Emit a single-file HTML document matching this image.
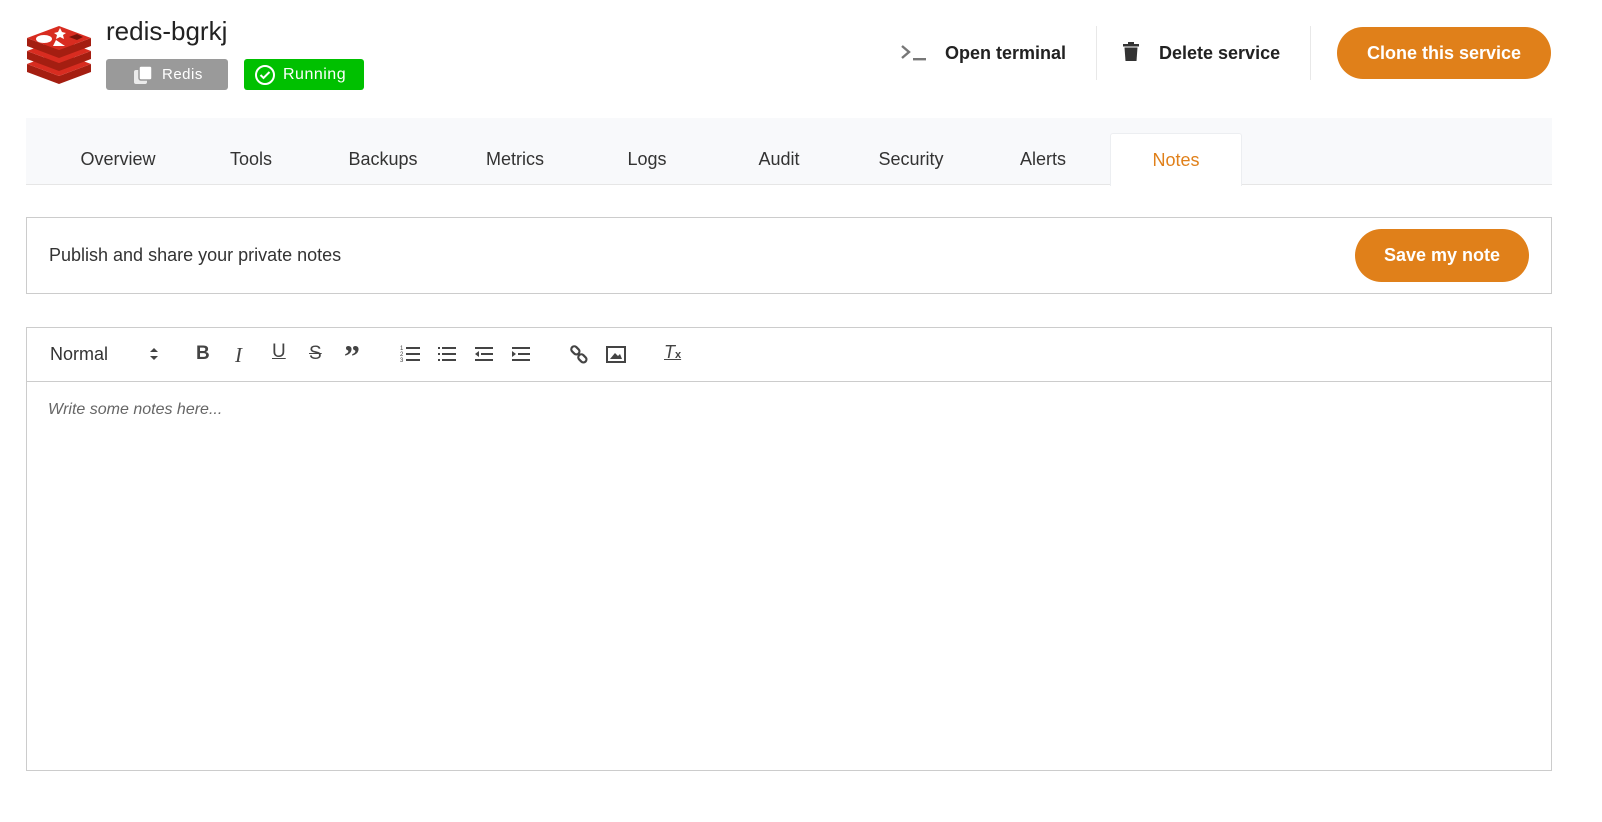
<!DOCTYPE html>
<html><head><meta charset="utf-8"><style>
*{box-sizing:border-box;margin:0;padding:0}
body{width:1602px;height:822px;background:#fff;font-family:"Liberation Sans",Arial,sans-serif;color:#222;position:relative;overflow:hidden}
.abs{position:absolute}
.title{left:106px;top:16px;font-size:26px;color:#222}
.badge{top:59px;height:31px;border-radius:3px;color:#fff;font-size:15px;display:flex;align-items:center;letter-spacing:.5px}
.act{top:43px;font-size:18px;font-weight:bold;color:#222}
.sep{top:26px;width:1px;height:54px;background:#e8e8e8}
.btn{background:#e0801a;color:#fff;font-weight:bold;font-size:18px;border-radius:27px;display:flex;align-items:center;justify-content:center}
.tabs{left:26px;top:118px;width:1526px;height:67px;background:#f8f9fb;border-bottom:1px solid #e6e6e6}
.tab{position:absolute;top:15px;width:132px;height:52px;text-align:center;line-height:52px;font-size:18px;color:#333}
.tab.on{background:#fff;color:#e0801a;border:1px solid #eceef1;border-bottom:none;border-radius:3px 3px 0 0;height:53px}
.box{border:1px solid #ccc}
.tb{font-size:18px;color:#333}
</style></head><body>
<svg class="abs" style="left:25px;top:24px" width="68" height="60" viewBox="0 0 68 60">
<path d="M2 40 L34 52 L66 40 L66 48 L34 60 L2 48Z" fill="#a41e11"/>
<path d="M2 40 L34 28 L66 40 L34 52Z" fill="#d82c20"/>
<path d="M2 27 L34 39 L66 27 L66 35 L34 47 L2 35Z" fill="#a41e11"/>
<path d="M2 27 L34 15 L66 27 L34 39Z" fill="#d82c20"/>
<path d="M2 14 L34 26 L66 14 L66 22 L34 34 L2 22Z" fill="#a41e11"/>
<path d="M2 14 L34 2 L66 14 L34 26Z" fill="#d82c20"/>
<ellipse cx="19" cy="15" rx="8" ry="4" fill="#fff"/>
<path d="M35 4 l2 4 4 1 -3 2 1 4 -4-2 -4 2 1-4 -3-2 4-1z" fill="#fff"/>
<path d="M28 22 L40 22 L31 16Z" fill="#fff"/>
<path d="M44 13 L52 10 L58 13 L52 16Z" fill="#7a1209"/>
</svg>
<div class="abs title">redis-bgrkj</div>
<div class="abs badge" style="left:106px;width:122px;background:#9a9a9a;padding-left:26px">
<svg width="22" height="22" viewBox="0 0 22 22" style="margin-right:8px"><rect x="2" y="6" width="13" height="14" rx="2" fill="#fff" opacity=".8"/><rect x="7" y="2" width="13" height="14" rx="2" fill="#fff" stroke="#9a9a9a" stroke-width="1.5"/></svg>Redis</div>
<div class="abs badge" style="left:244px;width:120px;background:#00c000;padding-left:10px;font-size:16px">
<svg width="22" height="22" viewBox="0 0 22 22" style="margin-right:7px"><circle cx="11" cy="11" r="9" fill="none" stroke="#fff" stroke-width="2"/><path d="M6.5 11 l3 3 6-6" fill="none" stroke="#fff" stroke-width="2"/></svg>Running</div>
<svg class="abs" style="left:900px;top:44px" width="28" height="18" viewBox="0 0 28 18"><path d="M2 2 L9 8 L2 14" fill="none" stroke="#777" stroke-width="2.4"/><rect x="13" y="14" width="13" height="2.4" fill="#777"/></svg>
<div class="abs act" style="left:945px">Open terminal</div>
<div class="abs sep" style="left:1096px"></div>
<svg class="abs" style="left:1122px;top:42px" width="18" height="20" viewBox="0 0 18 20"><rect x="1" y="2" width="16" height="2.5" fill="#333"/><rect x="6" y="0" width="6" height="3" fill="#333"/><path d="M2.5 5.5 L15.5 5.5 L14.5 19 L3.5 19Z" fill="#333"/></svg>
<div class="abs act" style="left:1159px">Delete service</div>
<div class="abs sep" style="left:1310px"></div>
<div class="abs btn" style="left:1337px;top:27px;width:214px;height:52px">Clone this service</div>
<div class="abs tabs">
<div class="tab" style="left:26px">Overview</div>
<div class="tab" style="left:159px">Tools</div>
<div class="tab" style="left:291px">Backups</div>
<div class="tab" style="left:423px">Metrics</div>
<div class="tab" style="left:555px">Logs</div>
<div class="tab" style="left:687px">Audit</div>
<div class="tab" style="left:819px">Security</div>
<div class="tab" style="left:951px">Alerts</div>
<div class="tab on" style="left:1084px">Notes</div>
</div>
<div class="abs box" style="left:26px;top:217px;width:1526px;height:77px"></div>
<div class="abs" style="left:49px;top:245px;font-size:18px;color:#333">Publish and share your private notes</div>
<div class="abs btn" style="left:1355px;top:229px;width:174px;height:53px">Save my note</div>
<div class="abs box" style="left:26px;top:327px;width:1526px;height:444px"></div>
<div class="abs" style="left:27px;top:381px;width:1524px;height:1px;background:#ccc"></div>
<div class="abs tb" style="left:50px;top:344px;font-size:18px">Normal</div>
<svg class="abs" style="left:149px;top:347px" width="10" height="14"><path d="M1 5 L5 1 L9 5Z M1 9 L5 13 L9 9Z" fill="#444"/></svg>
<div class="abs" style="left:196px;top:343px;font-weight:bold;font-size:19px;color:#444">B</div>
<div class="abs" style="left:235px;top:343px;font-style:italic;font-family:'Liberation Serif';font-size:21px;color:#444">I</div>
<div class="abs" style="left:272px;top:341px;text-decoration:underline;font-size:19px;color:#444">U</div>
<div class="abs" style="left:309px;top:343px;text-decoration:line-through;font-size:19px;color:#444">S</div>
<div class="abs" style="left:344px;top:338px;font-weight:bold;font-size:32px;color:#444;font-family:'Liberation Serif'">”</div>
<svg class="abs" style="left:400px;top:344px" width="140" height="20" viewBox="0 0 140 20" fill="#444">
<text x="0" y="6" font-size="6">1</text><text x="0" y="12" font-size="6">2</text><text x="0" y="18" font-size="6">3</text>
<rect x="6" y="3" width="14" height="2"/><rect x="6" y="9" width="14" height="2"/><rect x="6" y="15" width="14" height="2"/>
<rect x="38" y="3" width="2" height="2"/><rect x="38" y="9" width="2" height="2"/><rect x="38" y="15" width="2" height="2"/>
<rect x="42" y="3" width="14" height="2"/><rect x="42" y="9" width="14" height="2"/><rect x="42" y="15" width="14" height="2"/>
<rect x="75" y="3" width="18" height="2"/><rect x="81" y="9" width="12" height="2"/><rect x="75" y="15" width="18" height="2"/><path d="M75 10 L79 7 L79 13Z"/>
<rect x="112" y="3" width="18" height="2"/><rect x="118" y="9" width="12" height="2"/><rect x="112" y="15" width="18" height="2"/><path d="M116 10 L112 7 L112 13Z"/>
</svg>
<svg class="abs" style="left:569px;top:345px" width="20" height="20" viewBox="0 0 20 20" fill="none" stroke="#444" stroke-width="2.2"><rect x="2" y="2" width="9" height="6" rx="3" transform="rotate(45 6 5)"/><rect x="9" y="10" width="9" height="6" rx="3" transform="rotate(45 13 13)"/></svg>
<svg class="abs" style="left:606px;top:346px" width="20" height="17" viewBox="0 0 20 17"><rect x="1" y="1" width="18" height="15" fill="none" stroke="#444" stroke-width="2"/><path d="M4 13 L9 7 L12 10 L14 8 L16 13Z" fill="#444"/></svg>
<div class="abs" style="left:664px;top:342px;font-style:italic;text-decoration:underline;font-size:18px;color:#444">T<span style="font-size:11px;font-style:normal;font-weight:bold">x</span></div>
<div class="abs" style="left:48px;top:401px;font-style:italic;font-size:16px;color:#666">Write some notes here...</div>
</body></html>
